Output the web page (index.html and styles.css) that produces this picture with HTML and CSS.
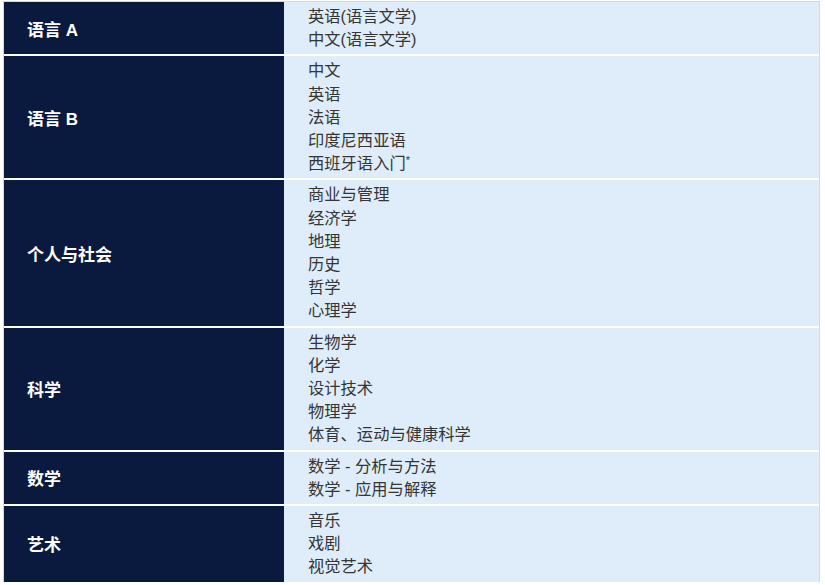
FILE: index.html
```html
<!DOCTYPE html>
<html lang="zh">
<head>
<meta charset="utf-8">
<title>IB 课程</title>
<link rel="stylesheet" href="styles.css">
</head>
<body>
<div class="table">
  <div class="row">
    <div class="label">语言 A</div>
    <ul class="items"><li>英语(语言文学)</li><li>中文(语言文学)</li></ul>
  </div>
  <div class="row">
    <div class="label">语言 B</div>
    <ul class="items"><li>中文</li><li>英语</li><li>法语</li><li>印度尼西亚语</li><li>西班牙语入门<sup>*</sup></li></ul>
  </div>
  <div class="row">
    <div class="label">个人与社会</div>
    <ul class="items"><li>商业与管理</li><li>经济学</li><li>地理</li><li>历史</li><li>哲学</li><li>心理学</li></ul>
  </div>
  <div class="row">
    <div class="label">科学</div>
    <ul class="items"><li>生物学</li><li>化学</li><li>设计技术</li><li>物理学</li><li>体育、运动与健康科学</li></ul>
  </div>
  <div class="row">
    <div class="label">数学</div>
    <ul class="items"><li>数学 - 分析与方法</li><li>数学 - 应用与解释</li></ul>
  </div>
  <div class="row">
    <div class="label">艺术</div>
    <ul class="items"><li>音乐</li><li>戏剧</li><li>视觉艺术</li></ul>
  </div>
</div>
</body>
</html>
```
FILE: styles.css
```css
html, body {
  margin: 0;
  padding: 0;
  background: #ffffff;
}
body {
  padding: 2px 0 0 4px;
  font-family: "Liberation Sans", "Noto Sans CJK SC", sans-serif;
}
.table {
  width: 815px;
  display: flex;
  flex-direction: column;
  gap: 2px;
  outline: 1px solid #d3d7de;
}
.row {
  display: grid;
  grid-template-columns: 280px 1fr;
}
.label {
  background: #0a1a3e;
  color: #ffffff;
  font-weight: bold;
  font-size: 17px;
  display: flex;
  align-items: center;
  padding-left: 23px;
}
.items {
  list-style: none;
  margin: 0;
  background: #deedf9;
  color: #353535;
  font-size: 16.3px;
  line-height: 23.2px;
  padding: 3px 0 3px 24px;
}
.items sup {
  font-size: 11px;
  line-height: 0;
  vertical-align: 5px;
}
```
